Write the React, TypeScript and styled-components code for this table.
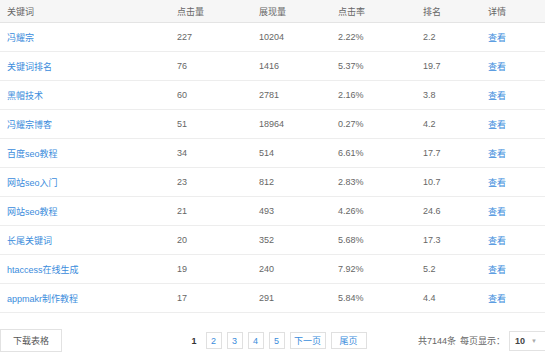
import React from 'react'
import styled, { createGlobalStyle } from 'styled-components'

interface Irow {
  keyword: string
  clicks: number
  views: number
  rate: string
  rank: string
}

const rows: Irow[] = [
  { keyword: '冯耀宗', clicks: 227, views: 10204, rate: '2.22%', rank: '2.2' },
  { keyword: '关键词排名', clicks: 76, views: 1416, rate: '5.37%', rank: '19.7' },
  { keyword: '黑帽技术', clicks: 60, views: 2781, rate: '2.16%', rank: '3.8' },
  { keyword: '冯耀宗博客', clicks: 51, views: 18964, rate: '0.27%', rank: '4.2' },
  { keyword: '百度seo教程', clicks: 34, views: 514, rate: '6.61%', rank: '17.7' },
  { keyword: '网站seo入门', clicks: 23, views: 812, rate: '2.83%', rank: '10.7' },
  { keyword: '网站seo教程', clicks: 21, views: 493, rate: '4.26%', rank: '24.6' },
  { keyword: '长尾关键词', clicks: 20, views: 352, rate: '5.68%', rank: '17.3' },
  { keyword: 'htaccess在线生成', clicks: 19, views: 240, rate: '7.92%', rank: '5.2' },
  { keyword: 'appmakr制作教程', clicks: 17, views: 291, rate: '5.84%', rank: '4.4' },
]

const GlobalStyle = createGlobalStyle`
  body {
    margin: 0;
    background: #fff;
    overflow: hidden;
    font-family: "Liberation Sans", Arial, "Noto Sans CJK SC", sans-serif;
    font-size: 9px;
    color: #666;
  }
`

const Page = styled.div`
  width: 554px;
`

const Row = styled.div<{ $head?: boolean }>`
  display: grid;
  grid-template-columns: 170px 82px 79px 85px 65px 1fr;
  align-items: center;
  height: ${(p) => (p.$head ? '23px' : '29px')};
  box-sizing: border-box;
  border-bottom: 1px solid ${(p) => (p.$head ? '#e4e4e4' : '#ededed')};
  background: ${(p) => (p.$head ? '#f6f6f6' : '#fff')};
`

const Cell = styled.div`
  padding-left: 7px;
  white-space: nowrap;
`

const LinkText = styled.a`
  color: #3a8cdc;
  text-decoration: none;
  cursor: pointer;
`

const Footer = styled.div`
  display: grid;
  grid-template-columns: 1fr auto 1fr;
  align-items: center;
  padding-top: 16px;
`

const DownloadButton = styled.button`
  justify-self: start;
  width: 62px;
  height: 23px;
  border: 1px solid #e2e2e2;
  background: #fff;
  color: #555;
  font: inherit;
  padding: 0;
`

const Pager = styled.div`
  display: flex;
  align-items: center;
  gap: 5px;
  margin-left: 2px;
`

const Current = styled.span`
  color: #333;
  font-weight: bold;
  padding: 0 4px 0 2px;
`

const PageBox = styled.a<{ $wide?: boolean }>`
  display: flex;
  align-items: center;
  justify-content: center;
  min-width: ${(p) => (p.$wide ? '36px' : '16px')};
  height: 17px;
  box-sizing: border-box;
  padding: 0 ${(p) => (p.$wide ? '3px' : '0')};
  border: 1px solid #e0e0e0;
  color: #3a8cdc;
  text-decoration: none;
`

const Info = styled.div`
  justify-self: end;
  display: flex;
  align-items: center;
  gap: 4px;
  color: #666;
`

const Select = styled.div`
  display: flex;
  align-items: center;
  justify-content: space-between;
  width: 45px;
  height: 20px;
  box-sizing: border-box;
  border: 1px solid #e2e2e2;
  padding: 0 16px 0 5px;
  color: #444;
  font-weight: bold;
`

const Arrow = styled.span`
  color: #aaa;
  font-size: 6px;
  font-weight: normal;
`

const App = (): React.ReactElement => {
  return (
    <Page>
      <GlobalStyle />
      <Row $head>
        <Cell>关键词</Cell>
        <Cell>点击量</Cell>
        <Cell>展现量</Cell>
        <Cell>点击率</Cell>
        <Cell>排名</Cell>
        <Cell>详情</Cell>
      </Row>
      {rows.map((el) => (
        <Row key={el.keyword}>
          <Cell>
            <LinkText>{el.keyword}</LinkText>
          </Cell>
          <Cell>{el.clicks}</Cell>
          <Cell>{el.views}</Cell>
          <Cell>{el.rate}</Cell>
          <Cell>{el.rank}</Cell>
          <Cell>
            <LinkText>查看</LinkText>
          </Cell>
        </Row>
      ))}
      <Footer>
        <DownloadButton>下载表格</DownloadButton>
        <Pager>
          <Current>1</Current>
          {[2, 3, 4, 5].map((n) => (
            <PageBox key={n}>{n}</PageBox>
          ))}
          <PageBox $wide>下一页</PageBox>
          <PageBox $wide>尾页</PageBox>
        </Pager>
        <Info>
          <span>共7144条</span>
          <span>每页显示：</span>
          <Select>
            10<Arrow>▼</Arrow>
          </Select>
        </Info>
      </Footer>
    </Page>
  )
}

export default App
